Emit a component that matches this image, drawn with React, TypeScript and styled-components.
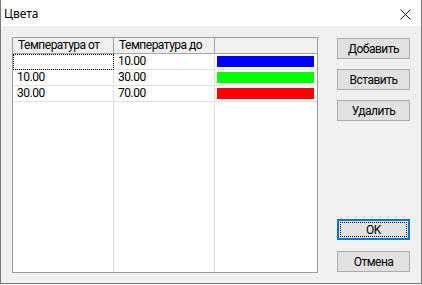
import React from "react";
import styled, { createGlobalStyle } from "styled-components";

const UI_FONT = `Roboto, "Noto Sans", "Liberation Sans", sans-serif`;

const GlobalStyle = createGlobalStyle`
  html, body {
    margin: 0;
    padding: 0;
    background: #f3f3f3;
  }
  body {
    font-family: ${UI_FONT};
    font-size: 12px;
    letter-spacing: -0.5px;
    color: #000;
  }
`;

const Window = styled.div`
  box-sizing: border-box;
  width: 422px;
  height: 284px;
  border: 1px solid #7a7a7a;
  border-top: none;
  background: #f0f0f0;
  display: flex;
  flex-direction: column;
`;

const TitleBar = styled.div`
  height: 26px;
  flex: none;
  background: #ffffff;
  display: flex;
  justify-content: space-between;
  align-items: flex-start;
`;

const Title = styled.div`
  padding: 7px 0 0 3px;
  line-height: 14px;
  font-family: "Noto Sans", "Liberation Sans", sans-serif;
  font-size: 12px;
  letter-spacing: 0;
`;

const CloseIcon = styled.svg`
  margin: 9px 10px 0 0;
  display: block;
`;

const Body = styled.div`
  flex: 1;
  display: flex;
  gap: 19px;
  padding: 11px 11px 10px 11px;
  min-height: 0;
`;

const ListView = styled.div`
  box-sizing: border-box;
  width: 306px;
  border: 1px solid #9c9c9c;
  background: #ffffff;
  display: grid;
  grid-template-columns: 101px 101px 1fr;
  grid-template-rows: 16px 16px 16px 16px 1fr;
`;

const HeaderCell = styled.div<{ $last?: boolean }>`
  box-sizing: border-box;
  background: #f0f0f0;
  border-right: ${(p) => (p.$last ? "none" : "1px solid #a5a5a5")};
  border-bottom: 1px solid #a5a5a5;
  padding-left: 5px;
  line-height: 14px;
  white-space: nowrap;
`;

const Cell = styled.div<{ $last?: boolean; $focused?: boolean; $filler?: boolean }>`
  box-sizing: border-box;
  border-right: ${(p) => (p.$last ? "none" : "1px solid #e3e3e3")};
  border-bottom: ${(p) => (p.$filler ? "none" : "1px solid #e3e3e3")};
  padding-left: 4px;
  line-height: 14px;
  white-space: nowrap;
  outline: ${(p) => (p.$focused ? "1px dotted #000" : "none")};
  outline-offset: -1px;
`;

const ColorCell = styled(Cell)`
  padding: 2px 0 0 2px;
`;

const ColorBar = styled.div<{ $color: string }>`
  width: 97px;
  height: 11px;
  background: ${(p) => p.$color};
`;

const ButtonColumn = styled.div`
  display: flex;
  flex-direction: column;
  justify-content: space-between;
  padding: 1px 0 1px 0;
`;

const ButtonGroup = styled.div<{ $gap: number }>`
  display: flex;
  flex-direction: column;
  gap: ${(p) => p.$gap}px;
`;

const Button = styled.button<{ $default?: boolean }>`
  box-sizing: border-box;
  width: 73px;
  height: 21px;
  margin: 0;
  padding: 0;
  background: #e1e1e1;
  border: ${(p) => (p.$default ? "2px solid #0078d7" : "1px solid #adadad")};
  font-family: ${UI_FONT};
  font-size: 12px;
  letter-spacing: -0.5px;
  line-height: 14px;
  color: #000;
  display: flex;
  align-items: center;
  justify-content: center;
  outline: ${(p) => (p.$default ? "1px dotted #000" : "none")};
  outline-offset: -4px;
`;

const rows = [
  { from: "", to: "10.00", color: "#0000ff" },
  { from: "10.00", to: "30.00", color: "#00ff00" },
  { from: "30.00", to: "70.00", color: "#ff0000" },
];

export default function App() {
  return (
    <>
      <GlobalStyle />
      <Window>
        <TitleBar>
          <Title>Цвета</Title>
          <CloseIcon width="11" height="11" viewBox="0 0 11 11">
            <path d="M0.5 0.5 L10.5 10.5 M10.5 0.5 L0.5 10.5" stroke="#111" strokeWidth="1" fill="none" />
          </CloseIcon>
        </TitleBar>
        <Body>
          <ListView>
            <HeaderCell>Температура от</HeaderCell>
            <HeaderCell>Температура до</HeaderCell>
            <HeaderCell $last />
            {rows.map((r, i) => (
              <React.Fragment key={i}>
                <Cell $focused={i === 0}>{r.from}</Cell>
                <Cell>{r.to}</Cell>
                <ColorCell $last>
                  <ColorBar $color={r.color} />
                </ColorCell>
              </React.Fragment>
            ))}
            <Cell $filler />
            <Cell $filler />
            <Cell $filler $last />
          </ListView>
          <ButtonColumn>
            <ButtonGroup $gap={10}>
              <Button>Добавить</Button>
              <Button>Вставить</Button>
              <Button>Удалить</Button>
            </ButtonGroup>
            <ButtonGroup $gap={11}>
              <Button $default>OK</Button>
              <Button>Отмена</Button>
            </ButtonGroup>
          </ButtonColumn>
        </Body>
      </Window>
    </>
  );
}
